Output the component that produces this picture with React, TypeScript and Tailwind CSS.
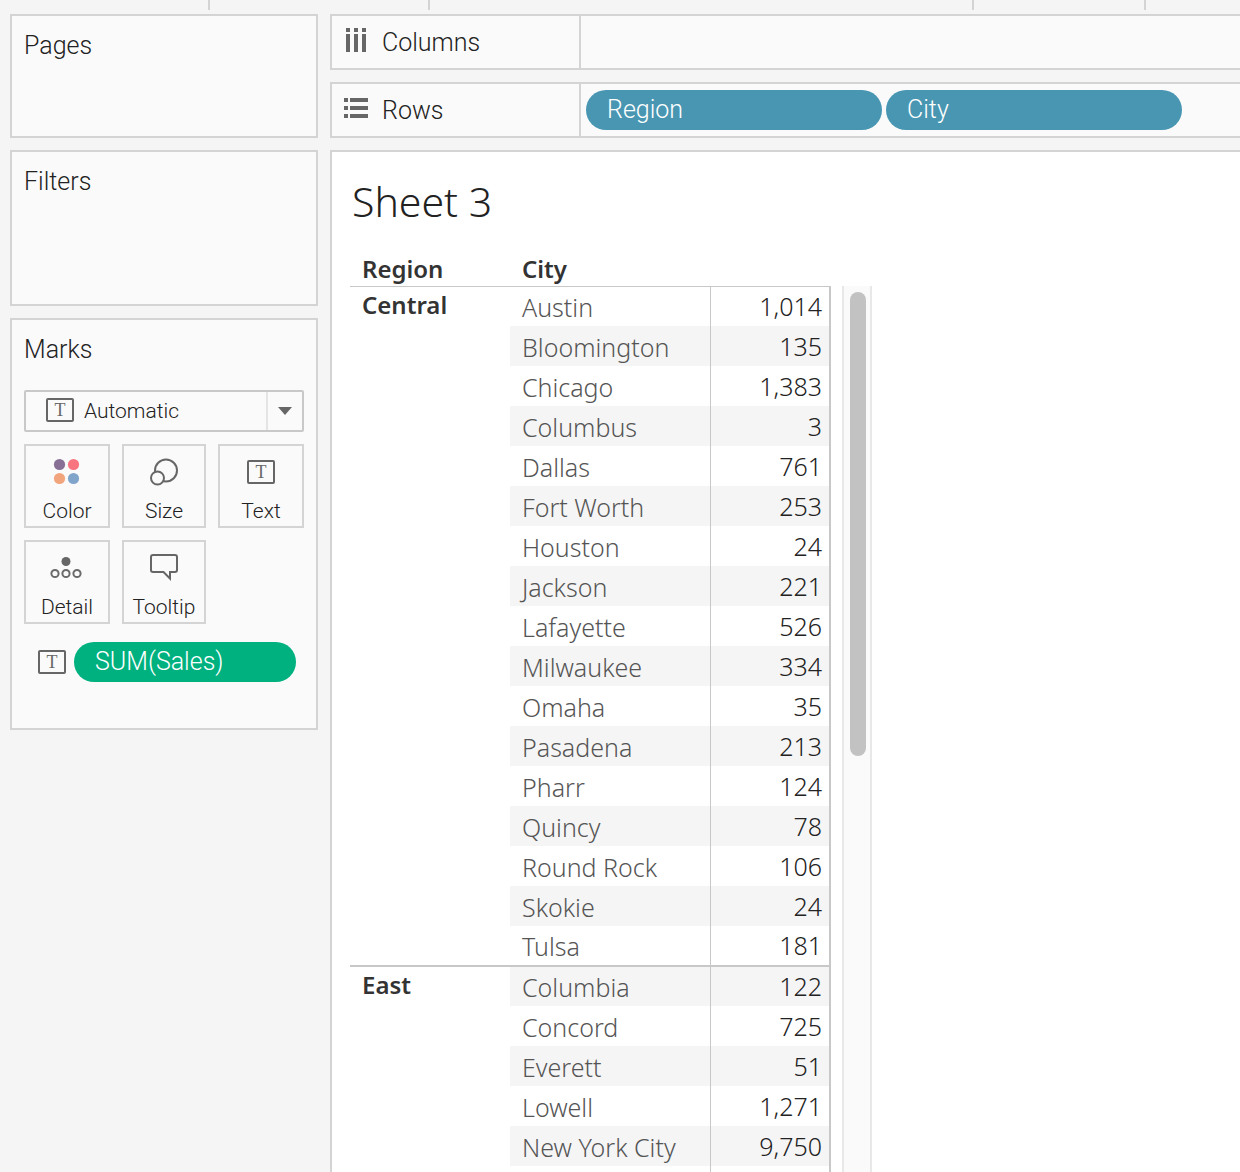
import type { ReactNode } from "react";

type CityRow = { city: string; sales: string };
type RegionGroup = { region: string; rows: CityRow[] };

const groups: RegionGroup[] = [
  {
    region: "Central",
    rows: [
      { city: "Austin", sales: "1,014" },
      { city: "Bloomington", sales: "135" },
      { city: "Chicago", sales: "1,383" },
      { city: "Columbus", sales: "3" },
      { city: "Dallas", sales: "761" },
      { city: "Fort Worth", sales: "253" },
      { city: "Houston", sales: "24" },
      { city: "Jackson", sales: "221" },
      { city: "Lafayette", sales: "526" },
      { city: "Milwaukee", sales: "334" },
      { city: "Omaha", sales: "35" },
      { city: "Pasadena", sales: "213" },
      { city: "Pharr", sales: "124" },
      { city: "Quincy", sales: "78" },
      { city: "Round Rock", sales: "106" },
      { city: "Skokie", sales: "24" },
      { city: "Tulsa", sales: "181" },
    ],
  },
  {
    region: "East",
    rows: [
      { city: "Columbia", sales: "122" },
      { city: "Concord", sales: "725" },
      { city: "Everett", sales: "51" },
      { city: "Lowell", sales: "1,271" },
      { city: "New York City", sales: "9,750" },
      { city: "", sales: "" },
    ],
  },
];

function TextIcon() {
  return (
    <span
      aria-hidden="true"
      className="flex h-6 w-7 shrink-0 items-center justify-center rounded-xs border-2 border-[#666] font-['Liberation_Serif',serif] text-lg leading-none text-[#666]"
    >
      T
    </span>
  );
}

function ColorIcon() {
  return (
    <svg width="28" height="28" viewBox="0 0 28 28" aria-hidden="true">
      <circle cx="6.5" cy="6.5" r="5.6" fill="#876f96" />
      <circle cx="20.5" cy="6.5" r="5.6" fill="#f8747f" />
      <circle cx="6.5" cy="20.5" r="5.6" fill="#f2a47c" />
      <circle cx="20.5" cy="20.5" r="5.6" fill="#81a4cb" />
    </svg>
  );
}

function SizeIcon() {
  return (
    <svg width="28" height="28" viewBox="0 0 28 28" fill="#fafafa" stroke="#666" strokeWidth="2" aria-hidden="true">
      <circle cx="16" cy="12.5" r="11" />
      <circle cx="7.5" cy="20" r="6.5" />
    </svg>
  );
}

function DetailIcon() {
  return (
    <svg width="34" height="22" viewBox="0 0 34 22" fill="none" stroke="#6a6a6a" strokeWidth="2" aria-hidden="true">
      <circle cx="16" cy="4.5" r="4.5" fill="#666" stroke="none" />
      <circle cx="5" cy="16.5" r="3.6" />
      <circle cx="16" cy="16.5" r="3.6" />
      <circle cx="27" cy="16.5" r="3.6" />
    </svg>
  );
}

function TooltipIcon() {
  return (
    <svg width="28" height="28" viewBox="0 0 28 28" fill="none" stroke="#666" strokeWidth="2" aria-hidden="true">
      <path d="M3 1H25Q27 1 27 3V16Q27 18 25 18H20V24.5L13.5 18H3Q1 18 1 16V3Q1 1 3 1Z" />
    </svg>
  );
}

function ColumnsIcon() {
  return (
    <svg width="26" height="24" viewBox="0 0 26 24" fill="#666" aria-hidden="true">
      <path d="M2 0h4v4h-4zM10 0h4v4h-4zM18 0h4v4h-4zM2 6h4v18h-4zM10 6h4v18h-4zM18 6h4v18h-4z" />
    </svg>
  );
}

function RowsIcon() {
  return (
    <svg width="26" height="20" viewBox="0 0 26 20" fill="#666" aria-hidden="true">
      <path d="M0 0h4v4h-4zM6 0h18v4h-18zM0 8h4v4h-4zM6 8h18v4h-18zM0 16h4v4h-4zM6 16h18v4h-18z" />
    </svg>
  );
}

function Card({ title, className, children }: { title: string; className: string; children?: ReactNode }) {
  return (
    <section className={`border-2 border-[#d4d4d4] bg-[#fafafa] px-3 pt-3 ${className}`}>
      <h2 className="text-[25px]/[36px] font-light">{title}</h2>
      {children}
    </section>
  );
}

function MarkButton({ label, icon }: { label: string; icon: ReactNode }) {
  return (
    <button
      type="button"
      className="flex h-21 flex-col items-center border-2 border-[#d4d4d4] pt-2 text-[21px]/[26px] font-light text-[#222]"
    >
      <span className="flex h-9 items-center justify-center">{icon}</span>
      <span className="pt-2">{label}</span>
    </button>
  );
}

function Shelf({ label, icon, children }: { label: string; icon: ReactNode; children?: ReactNode }) {
  return (
    <section aria-label={label} className="flex h-14 border-2 border-r-0 border-[#d4d4d4] bg-[#fafafa]">
      <div className="flex w-[249px] shrink-0 gap-3 border-r-2 border-[#d4d4d4] pl-3">
        <span className="flex h-12 items-center">{icon}</span>
        <h2 className="flex items-center pt-0.5 text-[25px]/[36px] font-light">{label}</h2>
      </div>
      <div className="flex items-center gap-1 pl-[5px]">{children}</div>
    </section>
  );
}

function FieldPill({ label, className }: { label: string; className: string }) {
  return (
    <button
      type="button"
      className={`h-10 shrink-0 rounded-full pr-5 pl-[21px] text-left text-[25px]/[36px] font-light text-white ${className}`}
    >
      {label}
    </button>
  );
}

function SalesTable() {
  return (
    <table
      aria-label="Sales by region and city"
      className="shrink-0 table-fixed border-separate border-spacing-0 self-start text-left font-['Noto_Sans',sans-serif] text-[25px]/[32px] text-[#333]"
    >
      <colgroup>
        <col className="w-40" />
        <col className="w-[201px]" />
        <col className="w-[120px]" />
      </colgroup>
      <thead>
        <tr className="h-9">
          <th scope="col" className="p-0 pt-0.5 pl-3 text-2xl/8 font-semibold">Region</th>
          <th scope="col" className="p-0 pt-0.5 pl-3 text-2xl/8 font-semibold">City</th>
          <td className="p-0" />
        </tr>
      </thead>
      {groups.map((group, g) => {
        const last = g === groups.length - 1;
        return (
          <tbody key={group.region}>
            {group.rows.map((row, i) => {
              const fill = (i + g) % 2 === 1 ? "bg-[#f5f5f5]" : "bg-white";
              const top = i === 0 ? "border-t" : "";
              const bottom = !last && i === group.rows.length - 1 ? "border-b" : "";
              return (
                <tr key={row.city} className="h-10">
                  {i === 0 && (
                    <th
                      scope="rowgroup"
                      rowSpan={group.rows.length}
                      className={`border-t border-[#c8c8c8] p-0 pt-[2px] pl-3 align-top text-2xl/8 font-semibold ${last ? "" : "border-b"}`}
                    >
                      {group.region}
                    </th>
                  )}
                  <th
                    scope="row"
                    className={`border-r border-[#c8c8c8] p-0 pl-3 font-light text-[#555] ${i === 0 ? "" : "pt-px"} ${fill} ${top} ${bottom}`}
                  >
                    {row.city}
                  </th>
                  <td
                    className={`border-r-2 border-[#c8c8c8] p-0 pr-[7px] pb-px text-right font-light text-[#222] ${fill} ${top} ${bottom}`}
                  >
                    {row.sales}
                  </td>
                </tr>
              );
            })}
          </tbody>
        );
      })}
    </table>
  );
}

export default function App() {
  return (
    <div className="flex h-screen flex-col overflow-hidden bg-[#f5f5f5] font-[Roboto,sans-serif] text-[#222]">
      <div className="flex h-[10px] shrink-0">
        <div className="w-[210px] border-r-2 border-[#d4d4d4]" />
        <div className="w-[220px] border-r-2 border-[#d4d4d4]" />
        <div className="w-[544px] border-r-2 border-[#d4d4d4]" />
        <div className="w-[172px] border-r-2 border-[#d4d4d4]" />
      </div>

      <div className="flex min-h-0 flex-1 gap-3 pt-1 pl-[10px]">
        <aside className="flex w-[308px] shrink-0 flex-col gap-3">
          <Card title="Pages" className="h-31" />
          <Card title="Filters" className="h-39" />
          <Card title="Marks" className="pb-[46px]">
            <div className="relative mt-[22px] flex h-[42px] items-center">
              <select
                aria-label="Mark type"
                className="h-full w-full appearance-none rounded-xs border-2 border-[#c8c8c8] bg-transparent pl-[58px] text-[21px]/[26px] font-light"
              >
                <option>Automatic</option>
              </select>
              <span className="pointer-events-none absolute top-2 left-[22px]">
                <TextIcon />
              </span>
              <span className="pointer-events-none absolute inset-y-[2px] right-[2px] flex w-9 items-center justify-center border-l-2 border-[#e4e4e4]">
                <svg width="14" height="8" viewBox="0 0 14 8" fill="#666" aria-hidden="true">
                  <path d="M0 0H14L7 8Z" />
                </svg>
              </span>
            </div>
            <div className="mt-3 grid grid-cols-[86fr_84fr_86fr] gap-3">
              <MarkButton label="Color" icon={<ColorIcon />} />
              <MarkButton label="Size" icon={<SizeIcon />} />
              <MarkButton label="Text" icon={<TextIcon />} />
              <MarkButton label="Detail" icon={<DetailIcon />} />
              <MarkButton label="Tooltip" icon={<TooltipIcon />} />
            </div>
            <div className="mt-[18px] flex items-center gap-2 pr-2 pl-[14px]">
              <TextIcon />
              <FieldPill label="SUM(Sales)" className="flex-1 bg-[#00b180]" />
            </div>
          </Card>
        </aside>

        <main className="flex min-w-0 flex-1 flex-col gap-3">
          <Shelf label="Columns" icon={<ColumnsIcon />} />
          <Shelf label="Rows" icon={<RowsIcon />}>
            <FieldPill label="Region" className="w-74 bg-[#4996b2]" />
            <FieldPill label="City" className="w-74 bg-[#4996b2]" />
          </Shelf>

          <section className="flex min-h-0 flex-1 flex-col overflow-hidden border-t-2 border-l-2 border-[#d4d4d4] bg-white pl-[18px]">
            <h1 className="mt-6 pl-0.5 font-['Noto_Sans',sans-serif] text-[41px]/[50px] font-light">Sheet 3</h1>
            <div className="mt-6 flex min-h-0 flex-1 gap-[11px] overflow-hidden">
              <SalesTable />
              <div className="mt-9 w-[30px] shrink-0 border-x-2 border-[#e8e8e8] bg-[#fafafa] pt-[6px] pl-[6px]">
                <div className="h-116 w-4 rounded-full bg-[#c2c2c2]" />
              </div>
            </div>
          </section>
        </main>
      </div>
    </div>
  );
}
